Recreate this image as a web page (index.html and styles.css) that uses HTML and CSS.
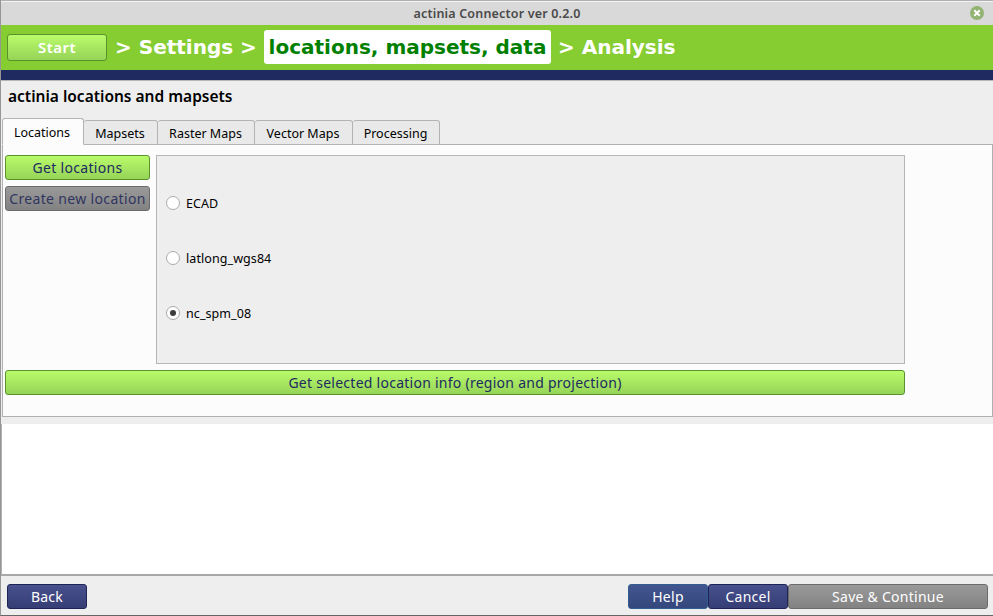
FILE: index.html
```html
<!DOCTYPE html>
<html lang="en">
<head>
<meta charset="utf-8">
<title>actinia Connector ver 0.2.0</title>
<link rel="stylesheet" href="styles.css">
</head>
<body>
<div class="window">
  <header class="titlebar">
    <span class="caption">actinia Connector ver 0.2.0</span>
    <svg class="close" width="14" height="14" viewBox="0 0 14 14"><circle cx="7" cy="7" r="7" fill="#92b372"/><path d="M4.3 4.3l5.4 5.4M9.7 4.3l-5.4 5.4" stroke="#fff" stroke-width="2"/></svg>
  </header>
  <nav class="steps">
    <button class="btn green start">Start</button>
    <span class="step settings">&gt; Settings &gt;</span>
    <span class="step current">locations, mapsets, data</span>
    <span class="step analysis">&gt; Analysis</span>
  </nav>
  <div class="stripe"></div>
  <h1 class="heading"><span>actinia locations and mapsets</span></h1>
  <div class="tabs">
    <div class="tab active"><span>Locations</span></div>
    <div class="tab mapsets"><span>Mapsets</span></div>
    <div class="tab raster"><span>Raster Maps</span></div>
    <div class="tab vector"><span>Vector Maps</span></div>
    <div class="tab processing"><span>Processing</span></div>
  </div>
  <main class="panel">
    <div class="row">
      <div class="actions">
        <button class="btn green get">Get locations</button>
        <button class="btn gray create">Create new location</button>
      </div>
      <div class="list">
        <label class="option"><i class="radio"></i><span>ECAD</span></label>
        <label class="option"><i class="radio"></i><span>latlong_wgs84</span></label>
        <label class="option"><i class="radio checked"></i><span>nc_spm_08</span></label>
      </div>
    </div>
    <button class="btn green info">Get selected location info (region and projection)</button>
  </main>
  <div class="output"></div>
  <footer class="footer">
    <button class="btn navy">Back</button>
    <div class="spacer"></div>
    <button class="btn blue">Help</button>
    <button class="btn navy">Cancel</button>
    <button class="btn gray save">Save &amp; Continue</button>
  </footer>
</div>
</body>
</html>
```
FILE: styles.css
```css
* { box-sizing: border-box; }
body { margin: 0; font-family: "Noto Sans", sans-serif; font-size: 13px; color: #000; }
.window { width: 993px; height: 616px; display: flex; flex-direction: column; background: #eee; border-left: 1px solid #969696; border-bottom: 1px solid #666; overflow: hidden; white-space: nowrap; }
.titlebar { height: 25px; flex: none; display: grid; grid-template-columns: 30px 1fr 30px; align-items: center; background: #d9d9d9; border-top: 1px solid #b0b0b0; box-shadow: inset 0 1px #f4f4f4; }
.caption { grid-column: 2; text-align: center; font-size: 12.5px; font-weight: 600; color: #4a4a4a; letter-spacing: .18px; }
.close { display: block; margin-left: 7px; }
.steps { height: 45px; flex: none; display: flex; align-items: center; background: #86cd32; padding: 0 0 1px 6px; }
.step { font: bold 20px/34px "DejaVu Sans", sans-serif; color: #fff; height: 34px; }
.settings { margin-left: 8px; width: 149px; }
.current { width: 287px; text-align: center; background: #fff; color: #008000; border-radius: 3px; }
.analysis { margin-left: 7px; }
.stripe { height: 10px; flex: none; background: #1f2a60; }
.heading { height: 38px; flex: none; margin: 0; border-top: 1px solid #b5b5b5; padding: 0 0 0 7px; font-size: 15.5px; line-height: 31px; font-weight: 600; }
.btn { display: flex; flex: none; align-items: center; justify-content: center; height: 25px; width: 80px; padding: 1px 0 0; border: 1px solid; border-radius: 3px; font: 14px/20px "Noto Sans", sans-serif; letter-spacing: .26px; white-space: nowrap; }
.green { color: #202a60; border-color: #59912a; background: linear-gradient(#b9fb6b, #96d457); }
.gray { color: #fff; border-color: #6b6b6b; background: linear-gradient(#9a9a9a, #828282); }
.navy { color: #fff; border-color: #1e2456; background: linear-gradient(#48508d, #363e75); }
.blue { color: #fff; border-color: #315c91; background: linear-gradient(#41558f, #35477c); }
.start { width: 100px; height: 27px; margin-top: 1px; padding: 0 0 1px; color: #fff; font-size: 15px; font-weight: 600; letter-spacing: .5px; }
.tabs { height: 27px; flex: none; display: flex; align-items: flex-end; padding-left: 1px; position: relative; }
.tab { height: 25px; border: 1px solid #b3b3b3; border-left: 0; background: #e9e9e9; border-radius: 3px 3px 0 0; display: flex; align-items: center; justify-content: center; font-size: 12.5px; padding: 2px 1px 0 0; }
.active { width: 82px; height: 27px; border-left: 1px solid #b3b3b3; border-bottom-color: #fcfcfc; background: #fcfcfc; padding: 1px 2px 0 0; }
.mapsets { width: 74px; }
.raster { width: 97px; }
.vector { width: 98px; }
.processing { width: 87px; }
.panel { height: 273px; flex: none; margin: -1px 0 0 1px; padding: 10px 0 0 2px; border: 1px solid #b0b0b0; background: #fcfcfc; }
.row { display: flex; gap: 6px; height: 209px; }
.actions { display: flex; flex-direction: column; gap: 6px; width: 145px; }
.actions .btn { width: 145px; }
.get { letter-spacing: .32px; }
.create { color: #303560; letter-spacing: .34px; }
.list { width: 749px; height: 209px; border: 1px solid #b5b5b5; background: #eee; display: flex; flex-direction: column; padding: 20px 0 0 9px; }
.option { height: 55px; display: flex; align-items: center; gap: 6px; font-size: 12.5px; letter-spacing: .08px; }
.radio { width: 14px; height: 14px; margin-bottom: 2px; border: 1px solid #aaa; border-radius: 50%; background: #fff; display: flex; align-items: center; justify-content: center; }
.checked::after { content: ""; width: 6px; height: 6px; border-radius: 50%; background: #3c3c3c; }
.info { width: 900px; margin-top: 6px; }
.output { height: 152px; flex: none; margin-top: 7px; background: #fff; border-left: 1px solid #b0b0b0; border-bottom: 2px solid #a8a8a8; }
.footer { flex: 1; display: flex; padding: 8px 5px 0 6px; }
.spacer { flex: 1; }
.save { width: 200px; }
```
